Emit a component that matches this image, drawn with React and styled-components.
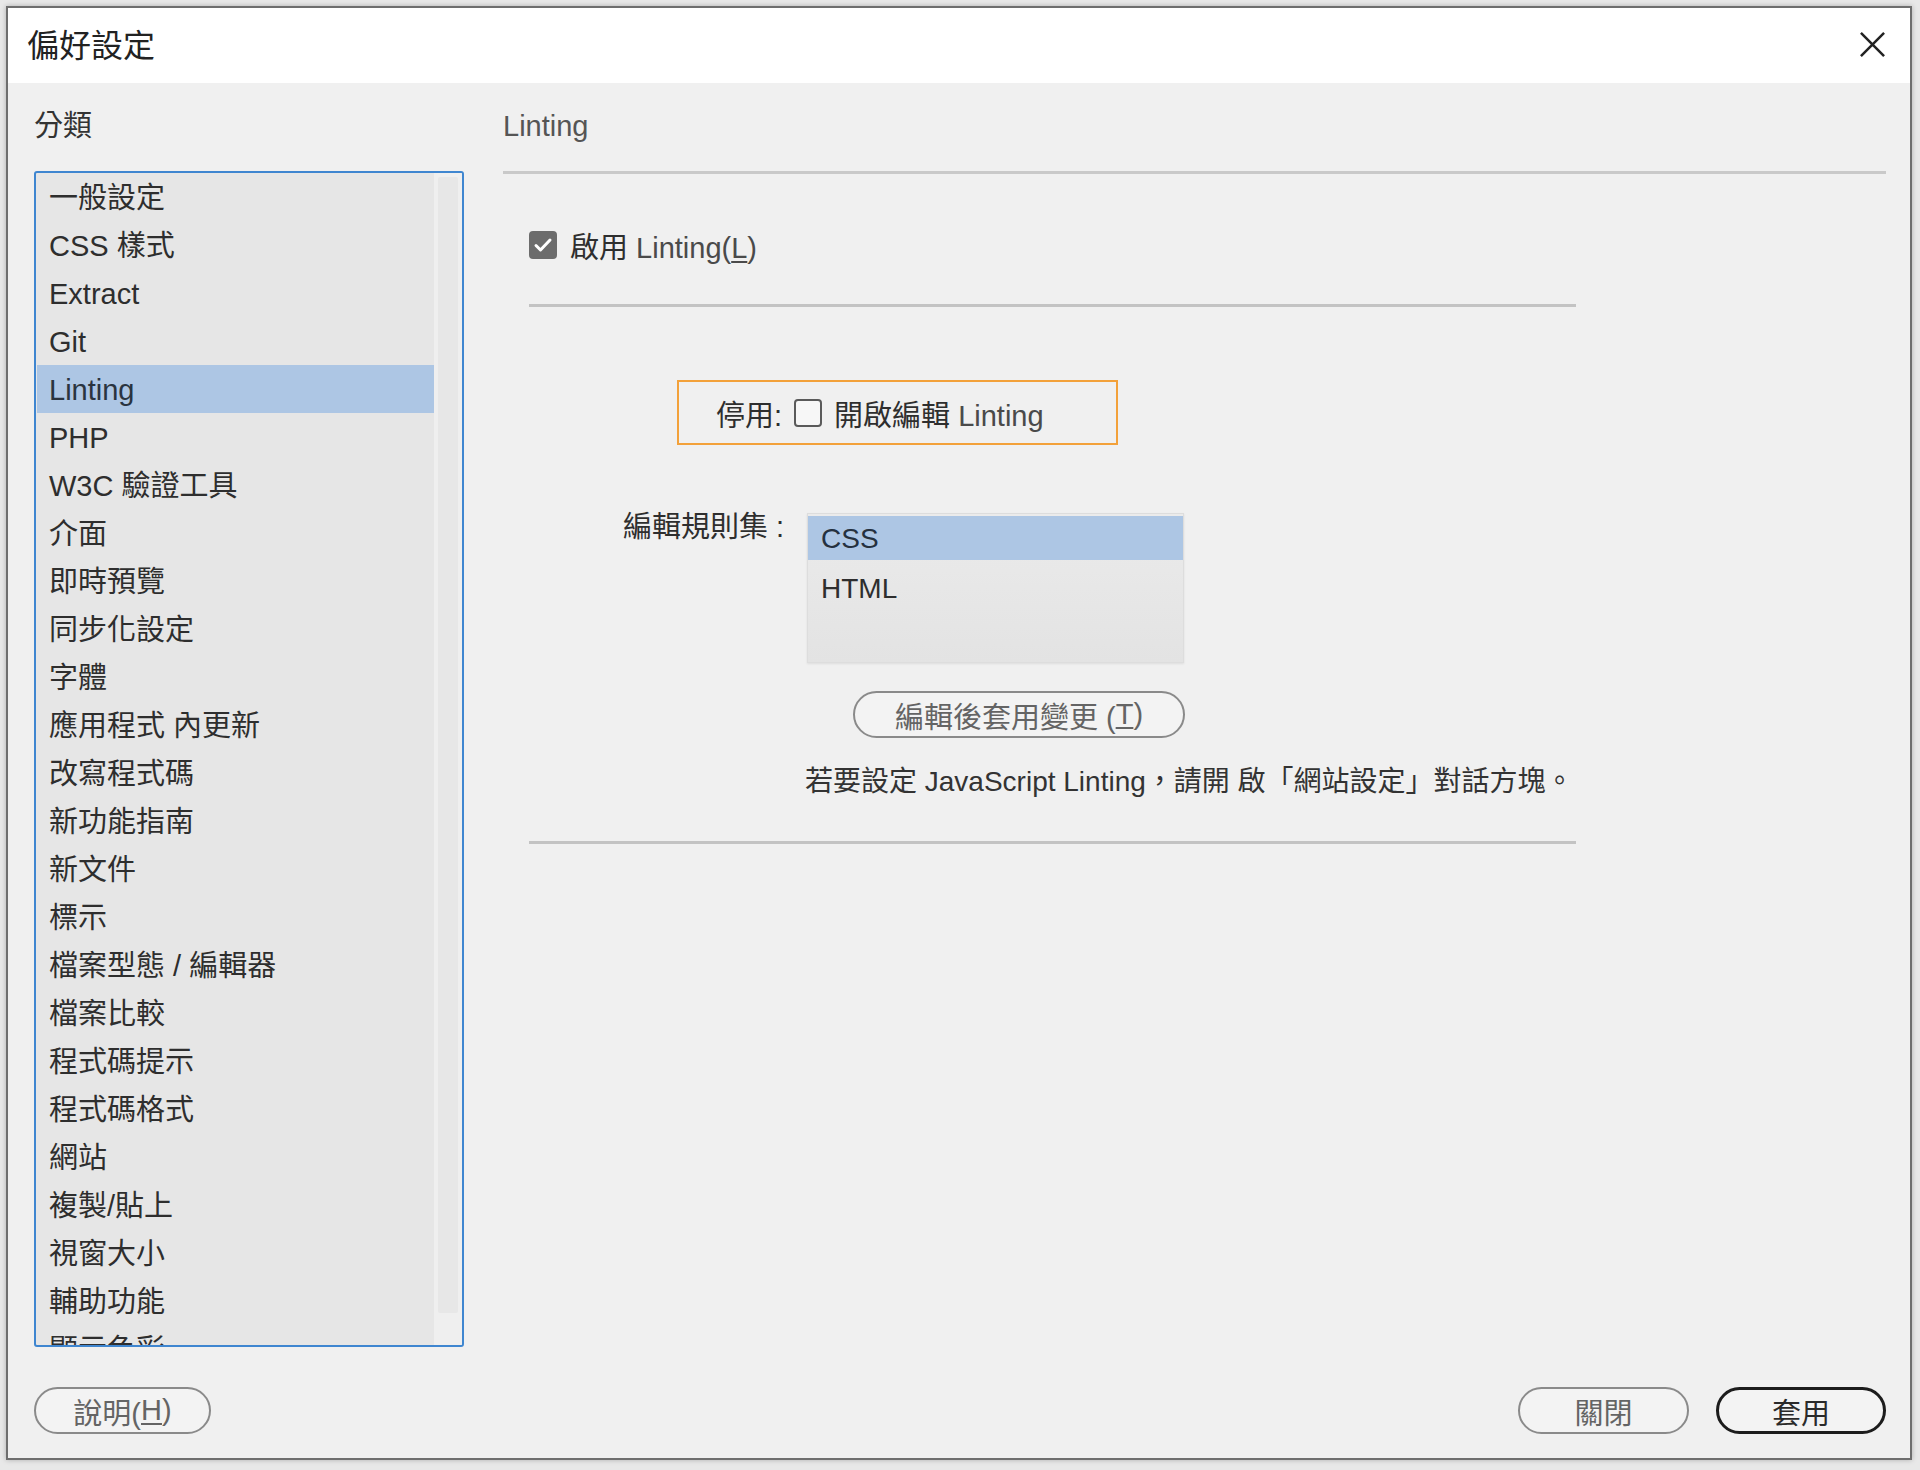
import styled, { createGlobalStyle } from "styled-components";

const categories = [
  "一般設定", "CSS 樣式", "Extract", "Git", "Linting", "PHP", "W3C 驗證工具",
  "介面", "即時預覽", "同步化設定", "字體", "應用程式 內更新", "改寫程式碼",
  "新功能指南", "新文件", "標示", "檔案型態 / 編輯器", "檔案比較", "程式碼提示",
  "程式碼格式", "網站", "複製/貼上", "視窗大小", "輔助功能", "顯示色彩",
];

const ruleSets = ["CSS", "HTML"];

export default function App() {
  return (
    <>
      <GlobalStyle />
      <Page>
        <Dialog>
          <TitleBar>
            <Title>偏好設定</Title>
            <CloseIcon viewBox="0 0 28 28">
              <path d="M2 2L26 26M26 2L2 26" />
            </CloseIcon>
          </TitleBar>

          <Body>
            <Column>
              <SectionLabel>分類</SectionLabel>
              <CategoryList>
                <Items>
                  {categories.map((c) => (
                    <Item key={c} selected={c === "Linting"}>{c}</Item>
                  ))}
                </Items>
                <ScrollTrack>
                  <ScrollThumb />
                </ScrollTrack>
              </CategoryList>
            </Column>

            <Column>
              <SectionLabel muted>Linting</SectionLabel>
              <HeaderRule />
              <Content>
                <CheckRow>
                  <CheckBox checked>
                    <svg viewBox="0 0 28 28" width="28" height="28">
                      <path d="M7 14.5l4.5 4.5 9.5-10" fill="none" stroke="#fff" strokeWidth="3" strokeLinecap="round" strokeLinejoin="round" />
                    </svg>
                  </CheckBox>
                  <span>啟用 <Latin>Linting(<u>L</u>)</Latin></span>
                </CheckRow>
                <Divider />

                <HighlightBox>
                  <span>停用:</span>
                  <CheckBox />
                  <span>開啟編輯 <Latin>Linting</Latin></span>
                </HighlightBox>

                <RuleRow>
                  <RuleLabel>編輯規則集 :</RuleLabel>
                  <RuleList>
                    {ruleSets.map((r) => (
                      <RuleItem key={r} selected={r === "CSS"}>{r}</RuleItem>
                    ))}
                  </RuleList>
                </RuleRow>

                <PillButton width={332} style={{ marginLeft: 324, marginTop: 28 }}>
                  編輯後套用變更 (<u>T</u>)
                </PillButton>

                <Info>
                  若要設定 JavaScript Linting，請開 啟「網站設定」對話方塊。
                </Info>
                <Divider />
              </Content>
            </Column>
          </Body>

          <Footer>
            <PillButton width={177}>說明(<u>H</u>)</PillButton>
            <ButtonGroup>
              <PillButton width={171}>關閉</PillButton>
              <PillButton width={170} primary>套用</PillButton>
            </ButtonGroup>
          </Footer>
        </Dialog>
      </Page>
    </>
  );
}

const GlobalStyle = createGlobalStyle`
  html, body {
    margin: 0;
    padding: 0;
    background: #e8e8e8;
  }
  body {
    font-family: "Liberation Sans", "Noto Sans CJK TC", sans-serif;
    color: #2e2e2e;
  }
`;

const Page = styled.div`
  width: 1920px;
  height: 1470px;
  padding: 6px;
  box-sizing: border-box;
`;

const Dialog = styled.div`
  width: 1906px;
  height: 1454px;
  box-sizing: border-box;
  border: 2px solid #6e6e6e;
  background: #f0f0f0;
  box-shadow: 0 0 5px rgba(0, 0, 0, 0.25);
  display: flex;
  flex-direction: column;
`;

const TitleBar = styled.div`
  height: 75px;
  box-sizing: border-box;
  flex-shrink: 0;
  background: #fff;
  display: flex;
  align-items: center;
  justify-content: space-between;
  padding: 0 24px 6px 19px;
`;

const Title = styled.div`
  font-size: 32px;
  color: #222;
`;

const CloseIcon = styled.svg`
  width: 27px;
  height: 27px;
  stroke: #222;
  stroke-width: 2.6;
  fill: none;
  margin-top: 4px;
`;

const Body = styled.div`
  display: grid;
  grid-template-columns: 430px 1fr;
  column-gap: 39px;
  padding: 23px 24px 0 26px;
`;

const Column = styled.div`
  display: flex;
  flex-direction: column;
`;

const SectionLabel = styled.div`
  height: 40px;
  line-height: 40px;
  font-size: 29px;
  color: ${({ muted }) => (muted ? "#555" : "#333")};
  margin-bottom: 25px;
`;

const CategoryList = styled.div`
  height: 1176px;
  box-sizing: border-box;
  border: 2px solid #3f86d0;
  border-radius: 3px;
  background: #e6e6e6;
  display: flex;
  overflow: hidden;
`;

const Items = styled.div`
  flex: 1;
  padding-left: 1px;
`;

const Item = styled.div`
  height: 48px;
  line-height: 50px;
  padding-left: 12px;
  font-size: 29px;
  white-space: nowrap;
  background: ${({ selected }) => (selected ? "#adc6e4" : "transparent")};
  color: ${({ selected }) => (selected ? "#2a3440" : "#2e2e2e")};
`;

const ScrollTrack = styled.div`
  width: 28px;
  background: #efefef;
  padding: 4px 4px 0;
  box-sizing: border-box;
`;

const ScrollThumb = styled.div`
  height: 1136px;
  background: #e7e7e7;
  border-radius: 2px;
`;

const HeaderRule = styled.div`
  height: 3px;
  background: #c9c9c9;
`;

const Content = styled.div`
  display: flex;
  flex-direction: column;
  align-items: flex-start;
  padding-left: 26px;
`;

const CheckRow = styled.div`
  margin-top: 51px;
  height: 40px;
  display: flex;
  align-items: center;
  gap: 13px;
  font-size: 29px;
`;

const CheckBox = styled.span`
  width: 28px;
  height: 28px;
  box-sizing: border-box;
  border-radius: 4px;
  display: inline-flex;
  flex-shrink: 0;
  background: ${({ checked }) => (checked ? "#6c6c6c" : "#f7f7f7")};
  border: ${({ checked }) => (checked ? "none" : "2px solid #5a5a5a")};
`;

const Latin = styled.span`
  color: #4a4a4a;
  u {
    text-underline-offset: 3px;
  }
`;

const Divider = styled.div`
  width: 1047px;
  height: 3px;
  background: #c3c3c3;
  margin-top: 39px;
`;

const HighlightBox = styled.div`
  margin-top: 73px;
  margin-left: 148px;
  width: 441px;
  height: 65px;
  box-sizing: border-box;
  border: 2px solid #f3a13a;
  display: flex;
  align-items: center;
  gap: 12px;
  padding-left: 37px;
  font-size: 29px;
`;

const RuleRow = styled.div`
  margin-top: 68px;
  display: grid;
  grid-template-columns: 255px 377px;
  column-gap: 23px;
  align-items: start;
`;

const RuleLabel = styled.div`
  text-align: right;
  font-size: 29px;
  line-height: 40px;
  margin-top: -6px;
`;

const RuleList = styled.div`
  height: 150px;
  box-sizing: border-box;
  padding-top: 2px;
  display: flex;
  flex-direction: column;
  gap: 6px;
  border: 1px solid #dddddd;
  background: linear-gradient(#ebebeb, #e3e3e3);
  box-shadow: 0 1px 2px rgba(0, 0, 0, 0.08);
`;

const RuleItem = styled.div`
  height: 44px;
  line-height: 46px;
  padding-left: 13px;
  font-size: 28px;
  background: ${({ selected }) => (selected ? "#adc6e4" : "transparent")};
  color: ${({ selected }) => (selected ? "#25313f" : "#2e2e2e")};
`;

const PillButton = styled.div`
  width: ${({ width }) => width}px;
  height: 47px;
  box-sizing: border-box;
  border: ${({ primary }) => (primary ? "3px solid #1c1c1c" : "2px solid #8a8a8a")};
  border-radius: 24px;
  background: #f3f3f3;
  display: flex;
  align-items: center;
  justify-content: center;
  font-size: 29px;
  color: ${({ primary }) => (primary ? "#2a2a2a" : "#646464")};
  u {
    text-underline-offset: 3px;
  }
`;

const Info = styled.div`
  margin-top: 24px;
  margin-left: 276px;
  line-height: 40px;
  font-size: 28px;
  white-space: nowrap;
  color: #333;
`;

const Footer = styled.div`
  display: flex;
  justify-content: space-between;
  padding: 40px 24px 24px 26px;
`;

const ButtonGroup = styled.div`
  display: flex;
  gap: 27px;
`;
